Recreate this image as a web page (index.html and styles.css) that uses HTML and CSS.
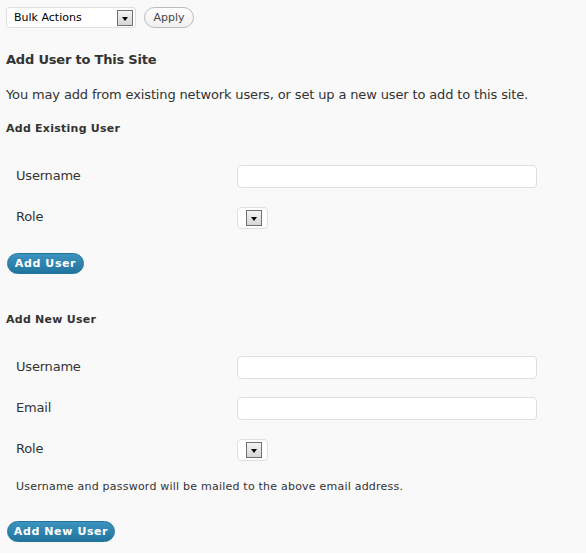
FILE: index.html
```html
<!DOCTYPE html>
<html>
<head>
<meta charset="utf-8">
<link rel="stylesheet" href="styles.css">
</head>
<body>
<div class="page">
  <div class="toolbar">
    <div class="select bulk"><span class="select-text">Bulk Actions</span><span class="arrow"><span class="tri"></span></span></div>
    <button class="apply">Apply</button>
  </div>
  <h3 class="title">Add User to This Site</h3>
  <p class="intro">You may add from existing network users, or set up a new user to add to this site.</p>
  <h4 class="sub">Add Existing User</h4>
  <div class="form">
    <div class="row"><span class="label">Username</span><input class="text" type="text"></div>
    <div class="row"><span class="label">Role</span><div class="select role"><span class="arrow"><span class="tri"></span></span></div></div>
  </div>
  <button class="primary first">Add User</button>
  <h4 class="sub second">Add New User</h4>
  <div class="form">
    <div class="row"><span class="label">Username</span><input class="text" type="text"></div>
    <div class="row"><span class="label">Email</span><input class="text" type="text"></div>
    <div class="row"><span class="label">Role</span><div class="select role"><span class="arrow"><span class="tri"></span></span></div></div>
  </div>
  <p class="note">Username and password will be mailed to the above email address.</p>
  <button class="primary last">Add New User</button>
</div>
</body>
</html>
```

FILE: styles.css
```css
html, body {
  margin: 0;
  padding: 0;
  background: #f9f9f9;
}
body {
  font-family: "DejaVu Sans", Verdana, sans-serif;
  color: #333;
}
.page {
  padding: 7px 0 0 6px;
}
.toolbar {
  display: flex;
  align-items: center;
  gap: 8px;
  height: 21px;
}
.select {
  box-sizing: border-box;
  background: #fff;
  border: 1px solid #dfdfdf;
  border-radius: 3px;
  display: flex;
  align-items: center;
  height: 21px;
}
.bulk {
  width: 130px;
  padding-left: 7px;
  justify-content: space-between;
  padding-right: 2px;
}
.select-text {
  font-size: 11px;
  color: #000;
}
.arrow {
  box-sizing: border-box;
  width: 16px;
  height: 16px;
  border: 1px solid #707070;
  background: linear-gradient(#f4f4f4, #d6d6d6);
  display: flex;
  align-items: center;
  justify-content: center;
}
.tri {
  width: 0;
  height: 0;
  border-left: 3.5px solid transparent;
  border-right: 3.5px solid transparent;
  border-top: 4px solid #000;
  margin-top: 2px;
}
.apply {
  box-sizing: border-box;
  height: 21px;
  width: 50px;
  padding: 0;
  border: 1px solid #bbb;
  border-radius: 11px;
  background: linear-gradient(#fefefe, #f0f0f0);
  font-family: "DejaVu Sans", Verdana, sans-serif;
  font-size: 11px;
  color: #464646;
}
.title {
  margin: 24px 0 0;
  font-size: 13px;
  line-height: 16px;
  font-weight: bold;
  letter-spacing: -0.2px;
}
.intro {
  margin: 19px 0 0;
  font-size: 13px;
  line-height: 16px;
  letter-spacing: -0.14px;
}
.sub {
  margin: 19px 0 0;
  font-size: 11px;
  line-height: 14px;
  font-weight: bold;
  letter-spacing: 0.25px;
}
.sub.second {
  margin-top: 39px;
}
.form {
  margin-top: 20px;
}
.row {
  display: flex;
  align-items: center;
  height: 41px;
}
.label {
  width: 221px;
  padding-left: 10px;
  font-size: 13px;
  line-height: 16px;
  margin-top: -2px;
  letter-spacing: -0.2px;
}
.text {
  box-sizing: border-box;
  width: 300px;
  height: 23px;
  margin: 0;
  border: 1px solid #dfdfdf;
  border-radius: 4px;
  background: #fff;
}
.role {
  width: 31px;
  height: 22px;
  justify-content: flex-end;
  padding-right: 5px;
  border-radius: 4px;
}
.primary {
  display: block;
  box-sizing: border-box;
  height: 21px;
  margin: 15px 0 0 1px;
  padding: 0;
  border: 1px solid #21759b;
  border-radius: 11px;
  background: linear-gradient(#3c93bf, #22749e);
  color: #fff;
  font-family: "DejaVu Sans", Verdana, sans-serif;
  font-size: 11px;
  font-weight: bold;
  letter-spacing: 0.6px;
  white-space: nowrap;
  text-align: center;
}
.first {
  width: 77px;
}
.last {
  width: 108px;
  margin-top: 27px;
}
.note {
  margin: 10px 0 0 10px;
  font-size: 11px;
  line-height: 14px;
  letter-spacing: 0.22px;
}
```
